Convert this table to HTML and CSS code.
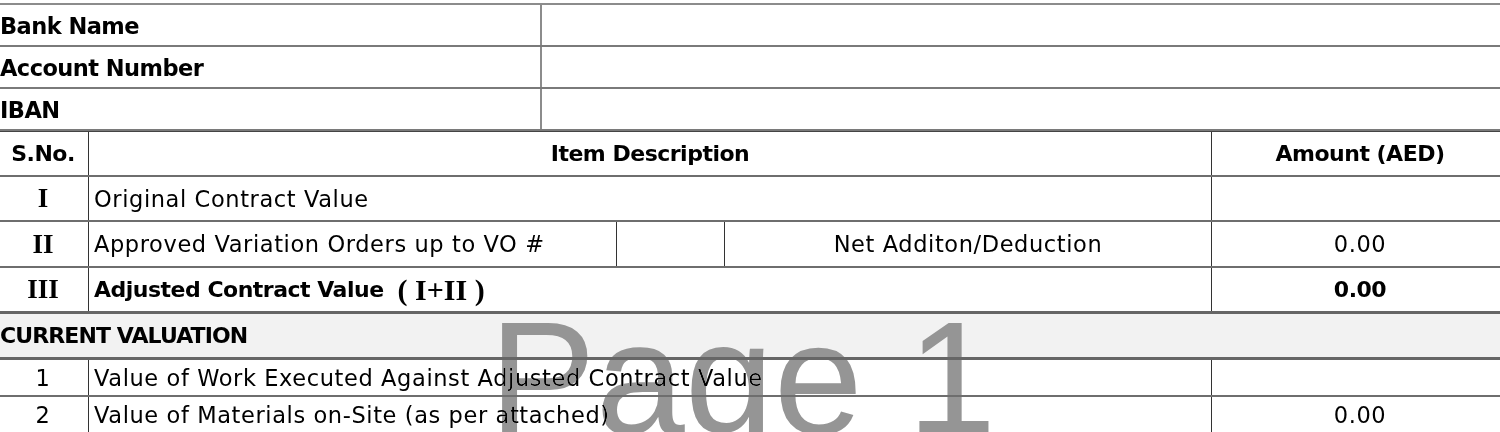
FILE: index.html
```html
<!DOCTYPE html>
<html>
<head>
<meta charset="utf-8">
<link rel="stylesheet" href="styles.css">
</head>
<body>
<div class="sheet">
  <div class="bank">
    <div class="brow"><div class="blabel">Bank Name</div><div class="bval"></div></div>
    <div class="brow"><div class="blabel">Account Number</div><div class="bval"></div></div>
    <div class="brow last"><div class="blabel">IBAN</div><div class="bval"></div></div>
  </div>
  <div class="main">
    <div class="row head">
      <div class="c sno b">S.No.</div>
      <div class="c desc span3 center b">Item Description</div>
      <div class="c amt b">Amount (AED)</div>
    </div>
    <div class="row r45">
      <div class="c sno roman">I</div>
      <div class="c desc span3">Original Contract Value</div>
      <div class="c amt"></div>
    </div>
    <div class="row r46">
      <div class="c sno roman">II</div>
      <div class="c desc">Approved Variation Orders up to VO #</div>
      <div class="c vo"></div>
      <div class="c net center">Net Additon/Deduction</div>
      <div class="c amt">0.00</div>
    </div>
    <div class="row r46 thick">
      <div class="c sno roman">III</div>
      <div class="c desc span3 b">Adjusted Contract Value <span class="formula">( I+II )</span></div>
      <div class="c amt b">0.00</div>
    </div>
    <div class="row section thick">
      <div class="c full b">CURRENT VALUATION</div>
    </div>
    <div class="row r37">
      <div class="c sno">1</div>
      <div class="c desc span3">Value of Work Executed Against Adjusted Contract Value</div>
      <div class="c amt"></div>
    </div>
    <div class="row r37">
      <div class="c sno">2</div>
      <div class="c desc span3">Value of Materials on-Site (as per attached)</div>
      <div class="c amt">0.00</div>
    </div>
  </div>
  <div class="watermark">Page 1</div>
</div>
</body>
</html>
```
FILE: styles.css
```css
html, body {
  margin: 0;
  padding: 0;
  background: #fff;
  overflow: hidden;
}
body {
  font-family: "DejaVu Sans", sans-serif;
  color: #000;
}
.sheet {
  position: relative;
  width: 1508px;
  padding-top: 3px;
}
.bank {
  border-top: 2px solid #8c8c8c;
}
.brow {
  display: grid;
  grid-template-columns: 540px 1fr;
  height: 42px;
  box-sizing: border-box;
  border-bottom: 2px solid #7a7a7a;
}
.blabel {
  display: flex;
  align-items: center;
  font-weight: bold;
  font-size: 22.5px;
  letter-spacing: -0.55px;
  padding-top: 1px;
}
.bval {
  border-left: 2px solid #8c8c8c;
}
.main {
  border-top: 1px solid #444;
}
.row {
  display: grid;
  grid-template-columns: 88px 528px 108px 487px 1fr;
  box-sizing: border-box;
  border-bottom: 2px solid #6e6e6e;
}
.head { height: 45px; }
.r45 { height: 45px; }
.r46 { height: 46px; }
.r37 { height: 37px; }
.thick { border-bottom: 3px solid #666; }
.section {
  height: 46px;
  background: #f2f2f2;
  grid-template-columns: 1fr;
}
.c {
  display: flex;
  align-items: center;
  font-size: 22.5px;
  letter-spacing: 0.6px;
  white-space: nowrap;
  overflow: visible;
}
.b {
  font-weight: bold;
  font-size: 22px;
  letter-spacing: -0.5px;
}
.section .b {
  letter-spacing: -0.9px;
}
.sno {
  justify-content: center;
  padding-right: 2px;
}
.roman {
  font-family: "Liberation Serif", serif;
  font-weight: bold;
  font-size: 27px;
  letter-spacing: 0;
}
.desc, .vo, .net, .amt {
  border-left: 1px solid #333;
}
.desc { padding-left: 5px; }
.span3 { grid-column: 2 / 5; }
.center { justify-content: center; padding-left: 0; }
.amt { justify-content: center; }
.formula {
  font-family: "Liberation Serif", serif;
  font-weight: bold;
  font-size: 30px;
  letter-spacing: 0;
  margin-left: 14px;
  white-space: pre;
}
.full {
  padding-left: 0;
}
.watermark {
  position: absolute;
  left: 489px;
  top: 298px;
  font-family: "Liberation Sans", sans-serif;
  font-size: 160px;
  line-height: 1;
  color: #959595;
  mix-blend-mode: darken;
  pointer-events: none;
  white-space: nowrap;
}
```
